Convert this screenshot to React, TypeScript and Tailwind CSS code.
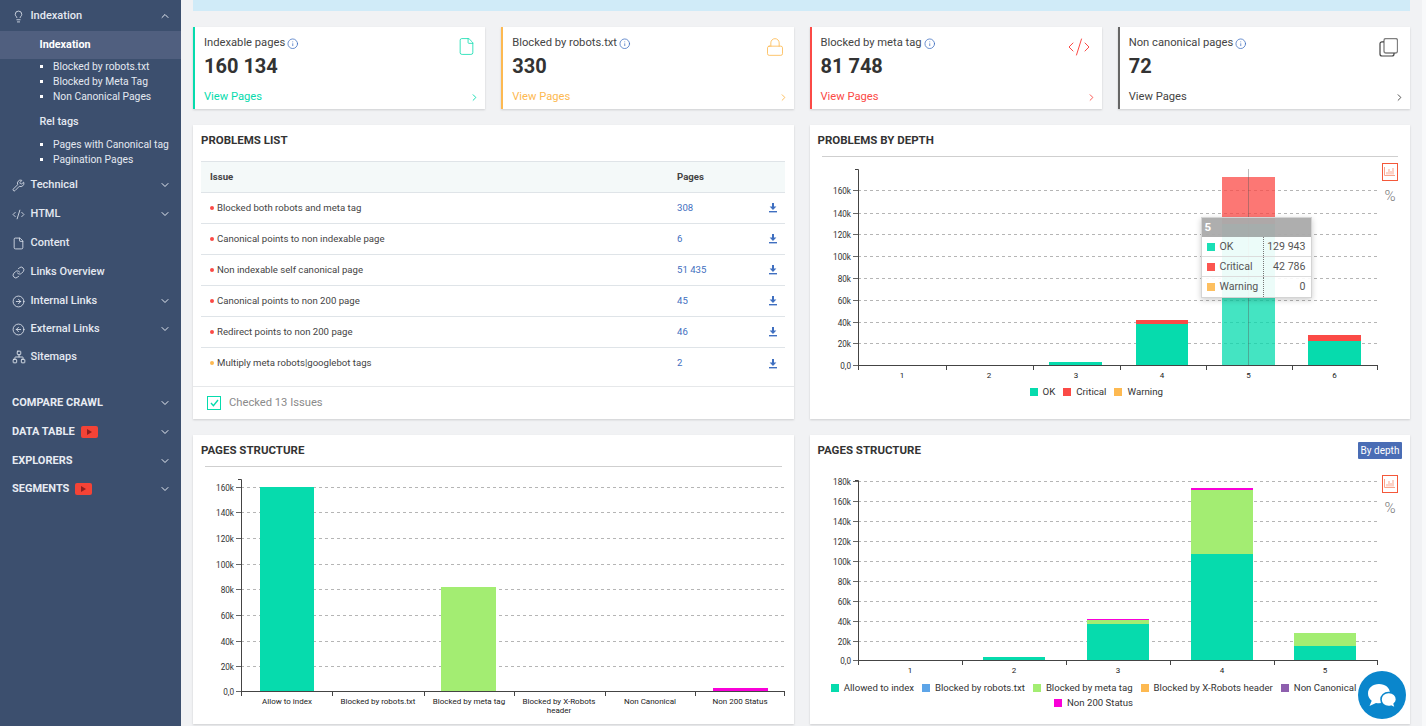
import React from 'react';
import {
  ChevronDown,
  ChevronRight,
  ChevronUp,
  CircleArrowLeft,
  CircleArrowRight,
  CodeXml,
  File,
  Info,
  Lightbulb,
  Link,
  Lock,
  Network,
  Wrench,
} from 'lucide-react';

const GREEN = '#06dbad';
const RED = '#fb4a46';
const LIME = '#a3ed72';
const MAGENTA = '#f900d8';

const NavRow = ({ icon, label, open, arrow, h = 'h-[29px]' }: { icon: React.ReactNode; label: string; open?: boolean; arrow?: boolean; h?: string }) => (
  <div className={`flex items-center pl-3 pr-[10px] pt-px text-[11px] font-medium text-[#e4e9f1] ${h}`}>
    <span className="flex w-[18.5px] shrink-0">{icon}</span>
    <span className="flex-1">{label}</span>
    {arrow && (open ? <ChevronUp size={12} strokeWidth={2} /> : <ChevronDown size={12} strokeWidth={2} />)}
  </div>
);

const SectionRow = ({ label, video, h = 'h-[29px]' }: { label: string; video?: boolean; h?: string }) => (
  <div className={`flex items-center pl-3 pr-[10px] pt-px text-[11px] font-bold text-[#e8ecf3] ${h}`}>
    <span>{label}</span>
    {video && (
      <span className="ml-[6px] flex h-3 w-[17px] items-center justify-center rounded-[2px] bg-[#f44336]">
        <svg width="5" height="6" viewBox="0 0 5 6"><path d="M0 0l5 3-5 3z" fill="#8f1f1f" /></svg>
      </span>
    )}
    <span className="flex-1" />
    <ChevronDown size={12} strokeWidth={2} />
  </div>
);

const SubItem = ({ label }: { label: string }) => (
  <li className="flex h-[15px] items-center pl-[40px] text-[10.3px] text-[#e4e9f1]">
    <span className="mr-[10px] h-[3px] w-[3px] bg-white" />
    {label}
  </li>
);

const Sidebar = () => (
  <aside className="w-[181px] shrink-0 bg-[#3c4f6e]">
    <NavRow h="h-[31px]" icon={<Lightbulb size={13} strokeWidth={1.5} />} label="Indexation" arrow open />
    <div className="flex h-[28px] items-center bg-[#505f7f] pl-[39.5px] text-[10.8px] font-bold text-white">Indexation</div>
    <ul>
      <SubItem label="Blocked by robots.txt" />
      <SubItem label="Blocked by Meta Tag" />
      <SubItem label="Non Canonical Pages" />
    </ul>
    <div className="flex h-[33px] items-center pl-[39.5px] pt-[3px] text-[10.8px] font-medium text-[#e4e9f1]">Rel tags</div>
    <ul className="mb-[3px]">
      <SubItem label="Pages with Canonical tag" />
      <SubItem label="Pagination Pages" />
    </ul>
    <NavRow icon={<Wrench size={13} strokeWidth={1.5} />} label="Technical" arrow />
    <NavRow icon={<CodeXml size={13} strokeWidth={1.5} />} label="HTML" arrow />
    <NavRow icon={<File size={13} strokeWidth={1.5} />} label="Content" />
    <NavRow icon={<Link size={13} strokeWidth={1.5} />} label="Links Overview" />
    <NavRow icon={<CircleArrowRight size={13} strokeWidth={1.5} />} label="Internal Links" arrow />
    <NavRow h="h-[27px]" icon={<CircleArrowLeft size={13} strokeWidth={1.5} />} label="External Links" arrow />
    <NavRow icon={<Network size={14} strokeWidth={1.5} />} label="Sitemaps" />
    <div className="h-[17px]" />
    <SectionRow label="COMPARE CRAWL" />
    <SectionRow label="DATA TABLE" video />
    <SectionRow label="EXPLORERS" />
    <SectionRow h="h-[27px]" label="SEGMENTS" video />
  </aside>
);

const CopyIcon = () => (
  <svg width="19" height="19" viewBox="0 0 19 19" fill="none" className="block">
    <rect x="5" y="0.5" width="13.500" height="14.500" rx="2" stroke="#808080" strokeWidth="1.3" />
    <path d="M5 3.800H3a2 2 0 0 0-2 2V16a2 2 0 0 0 2 2h10a2 2 0 0 0 2-2v-1" stroke="#444" strokeWidth="1.2" />
  </svg>
);

const StatCard = ({ title, value, icon, border, text, iconPos = 'right-[9px] top-[10px]' }: { title: string; value: string; icon: React.ReactNode; border: string; text: string; iconPos?: string }) => (
  <div className={`relative flex h-[82px] flex-col border-l-2 bg-white pl-[9px] pr-[5px] shadow-[0_1px_2px_rgba(0,0,0,0.15)] ${border}`}>
    <div className="mt-[9px] flex h-[15px] items-center text-[11.2px] text-[#444]">
      {title}
      <Info size={11.500} strokeWidth={1.6} className="ml-[2px] text-[#3f6fc0]" />
    </div>
    <div className="mt-[3px] text-[20px] font-bold leading-[25px] text-[#333]">{value}</div>
    <div className={`mt-[10px] flex items-center justify-between text-[11.2px] ${text}`}>
      <span>View Pages</span>
      <ChevronRight size={11} strokeWidth={2} />
    </div>
    <span className={`absolute ${iconPos} ${text}`}>{icon}</span>
  </div>
);

const Download = () => (
  <svg width="8" height="10" viewBox="0 0 8 10" fill="#3f6fc0">
    <path d="M3 0h2v3.600h2.400L4 7 .6 3.600H3z" />
    <rect x="0" y="8" width="8" height="1.400" />
  </svg>
);

const issues = [
  { label: 'Blocked both robots and meta tag', pages: '308', dot: 'bg-[#fb4a46]' },
  { label: 'Canonical points to non indexable page', pages: '6', dot: 'bg-[#fb4a46]' },
  { label: 'Non indexable self canonical page', pages: '51 435', dot: 'bg-[#fb4a46]' },
  { label: 'Canonical points to non 200 page', pages: '45', dot: 'bg-[#fb4a46]' },
  { label: 'Redirect points to non 200 page', pages: '46', dot: 'bg-[#fb4a46]' },
  { label: 'Multiply meta robots|googlebot tags', pages: '2', dot: 'bg-[#fdb951]' },
];

const ProblemsList = () => (
  <section className="flex h-[294px] flex-col bg-white shadow-[0_1px_2px_rgba(0,0,0,0.15)]">
    <h3 className="flex h-[36px] items-center pb-[5px] pl-2 text-[11.5px] font-bold text-[#333]">PROBLEMS LIST</h3>
    <div className="ml-2 mr-[9px] border-t border-[#dfe4e8]">
      <div className="flex h-[31px] items-center border-b border-[#dfe4e8] bg-[#f4f9f9] text-[9.6px] font-bold text-[#444]">
        <span className="w-[476px] pl-[9px]">Issue</span>
        <span>Pages</span>
      </div>
      {issues.map((row, idx) => (
        <div key={row.label} className={`flex h-[31px] items-center text-[9.6px] text-[#444] ${idx < 5 ? 'border-b border-[#dfe4e8]' : ''}`}>
          <span className="flex w-[476px] items-center pl-[9px]">
            <span className={`mr-[3px] h-[4px] w-[4px] rounded-full ${row.dot}`} />
            {row.label}
          </span>
          <span className="w-[92px] text-[#3f6fc0]">{row.pages}</span>
          <Download />
        </div>
      ))}
    </div>
    <div className="flex-1" />
    <div className="flex h-[33px] items-center border-t border-[#e6e8ea] pl-[14px] text-[11.2px] text-[#8a8a8a]">
      <span className="mr-[8px] flex h-[14px] w-[14px] items-center justify-center border-[1.5px] border-[#06dbad]">
        <svg width="9" height="8" viewBox="0 0 9 8" fill="none" stroke="#06dbad" strokeWidth="1.4"><path d="M1 4l2.400 2.600L8 1" /></svg>
      </span>
      Checked 13 Issues
    </div>
  </section>
);

type Seg = [number, number, string, number?];
type ChartProps = {
  ox: number;
  oy: number;
  w: number;
  h: number;
  axisX: number;
  top: number;
  bottom: number;
  right: number;
  yTicks: [string, number][];
  xTicks: number[];
  xLabels: [string, number, number?][];
  bars: { x: number; w: number; segs: Seg[] }[];
  toggles?: { x: number; y: number };
  cross?: number;
  labelY: number;
};

const Chart = ({ ox, oy, w, h, axisX, top, bottom, right, yTicks, xTicks, xLabels, bars, toggles, cross, labelY }: ChartProps) => (
  <svg width={w} height={h} viewBox={`${ox} ${oy} ${w} ${h}`} className="block">
    {yTicks.map(([label, y]) => (
      <g key={label}>
        {label !== '0,0' && <line x1={axisX} x2={right} y1={y + 0.5} y2={y + 0.5} stroke="#b5b5b5" strokeDasharray="3 3" />}
        <line x1={axisX - 5} x2={axisX} y1={y + 0.5} y2={y + 0.5} stroke="#666" />
        <text x={axisX - 7} y={y + 3.5} textAnchor="end" fontSize="8.2" fill="#333">{label}</text>
      </g>
    ))}
    {bars.map((b) =>
      b.segs.map(([t, e, color, op]) => (
        <rect key={`${b.x}-${t}`} x={b.x} y={t} width={b.w} height={e - t} fill={color} opacity={op ?? 1} />
      )),
    )}
    {cross !== undefined && <line x1={cross} x2={cross} y1={top} y2={bottom} stroke="#555" strokeOpacity="0.4" />}
    <path d={`M${axisX - 3} ${top + 0.5}H${axisX + 0.5}V${bottom + 0.5}H${right}`} fill="none" stroke="#444" strokeWidth="1" />
    {xTicks.map((x) => (
      <line key={x} x1={x + 0.5} x2={x + 0.5} y1={bottom} y2={bottom + 5} stroke="#444" />
    ))}
    {xLabels.map(([label, x, y]) => (
      <text key={label} x={x} y={y ?? labelY} textAnchor="middle" fontSize="8" fill="#222">{label}</text>
    ))}
    {toggles && (
      <g>
        <rect x={toggles.x + 0.5} y={toggles.y + 0.5} width="15" height="17" fill="#fff" stroke="#f4583a" />
        <path d={`M${toggles.x + 2.5} ${toggles.y + 4}V${toggles.y + 12.5}H${toggles.x + 13}`} fill="none" stroke="#f9a58d" />
        <path d={`M${toggles.x + 5} ${toggles.y + 11.5}V${toggles.y + 9}M${toggles.x + 7} ${toggles.y + 11.5}V${toggles.y + 6}M${toggles.x + 9} ${toggles.y + 11.5}V${toggles.y + 8}M${toggles.x + 11} ${toggles.y + 11.5}V${toggles.y + 5}`} stroke="#f9a58d" />
        <text x={toggles.x + 8} y={toggles.y + 38} textAnchor="middle" fontSize="15" fontWeight="300" fill="#777">%</text>
      </g>
    )}
  </svg>
);

const LegendItem = ({ color, label }: { color: string; label: string }) => (
  <span className="flex items-center">
    <span className={`mr-[5px] h-2 w-2 ${color}`} />
    {label}
  </span>
);

const Tooltip = () => (
  <div className="absolute left-[391px] top-[92px] w-[111px] border border-[#d4d4d4] bg-white/90 text-[10.6px] text-[#555] shadow-[0_2px_6px_rgba(0,0,0,0.2)]">
    <div className="flex h-[19px] items-center bg-[rgba(120,120,120,0.6)] pl-[3px] text-[11.5px] font-bold text-white">5</div>
    {[
      ['OK', '129 943', 'bg-[#1adfb5]'],
      ['Critical', '42 786', 'bg-[#fb5550]'],
      ['Warning', '0', 'bg-[#fdbf60]'],
    ].map(([name, val, color], idx) => (
      <div key={name} className={`flex h-[20px] items-center ${idx < 2 ? 'border-b border-[#dcdcdc]' : ''}`}>
        <span className="flex h-full w-[62px] items-center border-r border-dotted border-[#777] pl-[5px]">
          <span className={`mr-[5px] h-2 w-2 ${color}`} />
          {name}
        </span>
        <span className="flex-1 pr-[5px] text-right">{val}</span>
      </div>
    ))}
  </div>
);

const ChartPanel = ({ title, height, action, divider = true, children }: { title: string; height: string; action?: React.ReactNode; divider?: boolean; children: React.ReactNode }) => (
  <section className={`relative overflow-hidden bg-white shadow-[0_1px_2px_rgba(0,0,0,0.15)] ${height}`}>
    <div className="flex h-[31px] items-center justify-between pl-2 pr-2">
      <h3 className="text-[11.5px] font-bold text-[#333]">{title}</h3>
      {action}
    </div>
    {divider ? <div className="mx-3 h-px bg-[#cfcfcf]" /> : <div className="h-px" />}
    {children}
  </section>
);

const ChatButton = () => (
  <button className="absolute bottom-[7px] right-[16px] flex h-[48px] w-[48px] items-center justify-center rounded-full bg-[#0a86cc]">
    <svg width="48" height="48" viewBox="0 0 48 48">
      <path d="M21 13c-6.300 0-11 4-11 9.500 0 3 1.400 5.500 3.700 7.300L11.500 35l6.500-3c1 .2 2 .300 3 .300 6.300 0 11-4 11-9.800S27.300 13 21 13z" fill="#fff" />
      <path d="M30.500 21.500c-4.200 0-7.500 3-7.500 7s3.300 7 7.500 7c.9 0 1.700-.1 2.500-.3l4.500 2-1.300-4.300c1.400-1.300 2.300-2.900 2.300-4.400 0-4-3.300-7-7.500-7z" fill="#fff" stroke="#0a86cc" strokeWidth="1.600" />
    </svg>
  </button>
);

const App = () => (
  <div className="flex h-[726px] w-[1426px] overflow-hidden bg-[#f1f2f4] font-[Roboto,sans-serif]">
    <Sidebar />
    <main className="relative min-w-0 flex-1 pl-3 pr-3">
      <div className="h-[11px] bg-[#d0ebf8]" />
      <div className="mt-4 grid grid-cols-4 gap-4">
        <StatCard title="Indexable pages" value="160 134" border="border-[#06dbad]" text="text-[#06dbad]" icon={<File size={19} strokeWidth={1} />} />
        <StatCard title="Blocked by robots.txt" value="330" border="border-[#fdb951]" text="text-[#fdb951]" icon={<Lock size={20} strokeWidth={1} />} />
        <StatCard title="Blocked by meta tag" value="81 748" border="border-[#fb4a46]" text="text-[#fb4a46]" iconPos="right-[11px] top-[8px]" icon={<CodeXml size={24} strokeWidth={1} />} />
        <StatCard title="Non canonical pages" value="72" border="border-[#666]" text="text-[#444]" iconPos="right-[12px] top-[11px]" icon={<CopyIcon />} />
      </div>

      <div className="mt-4 grid grid-cols-2 gap-4">
        <ProblemsList />
        <ChartPanel title="PROBLEMS BY DEPTH" height="h-[294px]">
          <Chart
            ox={810}
            oy={157}
            w={600}
            h={228}
            axisX={858}
            top={169}
            bottom={365}
            right={1377}
            cross={1248.5}
            labelY={378}
            toggles={{ x: 1382, y: 163 }}
            yTicks={[['160k', 190], ['140k', 213], ['120k', 234], ['100k', 256], ['80k', 278], ['60k', 300], ['40k', 322], ['20k', 343], ['0,0', 365]]}
            xTicks={[858, 946, 1033, 1120, 1206, 1292, 1377]}
            xLabels={[['1', 902], ['2', 989], ['3', 1076], ['4', 1162], ['5', 1248.5], ['6', 1334.5]]}
            bars={[
              { x: 1049, w: 53, segs: [[362, 365, GREEN]] },
              { x: 1136, w: 52, segs: [[320, 324, RED], [324, 365, GREEN]] },
              { x: 1222, w: 53, segs: [[177, 224, RED, 0.75], [224, 365, GREEN, 0.75]] },
              { x: 1308, w: 53, segs: [[335, 341, RED], [341, 365, GREEN]] },
            ]}
          />
          <div className="flex h-[15px] items-center justify-center gap-[8px] pr-[27px] text-[9.7px] text-[#333]">
            <LegendItem color="bg-[#06dbad]" label="OK" />
            <LegendItem color="bg-[#fb4a46]" label="Critical" />
            <LegendItem color="bg-[#fdb951]" label="Warning" />
          </div>
          <Tooltip />
        </ChartPanel>
      </div>

      <div className="mt-4 grid grid-cols-2 gap-4">
        <ChartPanel title="PAGES STRUCTURE" height="h-[289px]">
          <Chart
            ox={193}
            oy={467}
            w={600}
            h={257}
            axisX={241}
            top={479}
            bottom={691}
            right={785}
            labelY={704}
            yTicks={[['160k', 487], ['140k', 512], ['120k', 538], ['100k', 564], ['80k', 589], ['60k', 615], ['40k', 641], ['20k', 666], ['0,0', 691]]}
            xTicks={[241, 332, 424, 514, 605, 695, 784]}
            xLabels={[['Allow to index', 287], ['Blocked by robots.txt', 378], ['Blocked by meta tag', 469], ['Blocked by X-Robots', 559], ['header', 559, 713], ['Non Canonical', 650], ['Non 200 Status', 740]]}
            bars={[
              { x: 260, w: 54, segs: [[487, 691, GREEN]] },
              { x: 441, w: 55, segs: [[587, 691, LIME]] },
              { x: 713, w: 55, segs: [[688, 691, MAGENTA]] },
            ]}
          />
        </ChartPanel>

        <ChartPanel
          title="PAGES STRUCTURE"
          height="h-[289px]"
          divider={false}
          action={<span className="flex h-[17px] w-[44px] items-center justify-center rounded-[1px] bg-[#4a6db5] text-[10px] text-white">By depth</span>}
        >
          <Chart
            ox={810}
            oy={467}
            w={600}
            h={213}
            axisX={858}
            top={480}
            bottom={660}
            right={1377}
            labelY={673}
            toggles={{ x: 1382, y: 475 }}
            yTicks={[['180k', 481], ['160k', 501], ['140k', 521], ['120k', 541], ['100k', 561], ['80k', 581], ['60k', 601], ['40k', 621], ['20k', 641], ['0,0', 660]]}
            xTicks={[858, 962, 1066, 1170, 1274, 1377]}
            xLabels={[['1', 910], ['2', 1014], ['3', 1118], ['4', 1222], ['5', 1325]]}
            bars={[
              { x: 983, w: 62, segs: [[657, 660, GREEN]] },
              { x: 1087, w: 62, segs: [[619, 620, MAGENTA], [620, 624, LIME], [624, 660, GREEN]] },
              { x: 1191, w: 62, segs: [[488, 490, MAGENTA], [490, 554, LIME], [554, 660, GREEN]] },
              { x: 1294, w: 62, segs: [[633, 646, LIME], [646, 660, GREEN]] },
            ]}
          />
          <div className="ml-[14px] flex w-[540px] flex-wrap justify-center gap-x-[8px] text-[9.6px] leading-[15px] text-[#333]">
            <LegendItem color="bg-[#06dbad]" label="Allowed to index" />
            <LegendItem color="bg-[#5da5e8]" label="Blocked by robots.txt" />
            <LegendItem color="bg-[#a3ed72]" label="Blocked by meta tag" />
            <LegendItem color="bg-[#fdb951]" label="Blocked by X-Robots header" />
            <LegendItem color="bg-[#8e5fae]" label="Non Canonical" />
            <LegendItem color="bg-[#f900d8]" label="Non 200 Status" />
          </div>
        </ChartPanel>
      </div>

      <ChatButton />
    </main>
    <div className="w-1 shrink-0 bg-[#f8f9fa]" />
  </div>
);

export default App;
